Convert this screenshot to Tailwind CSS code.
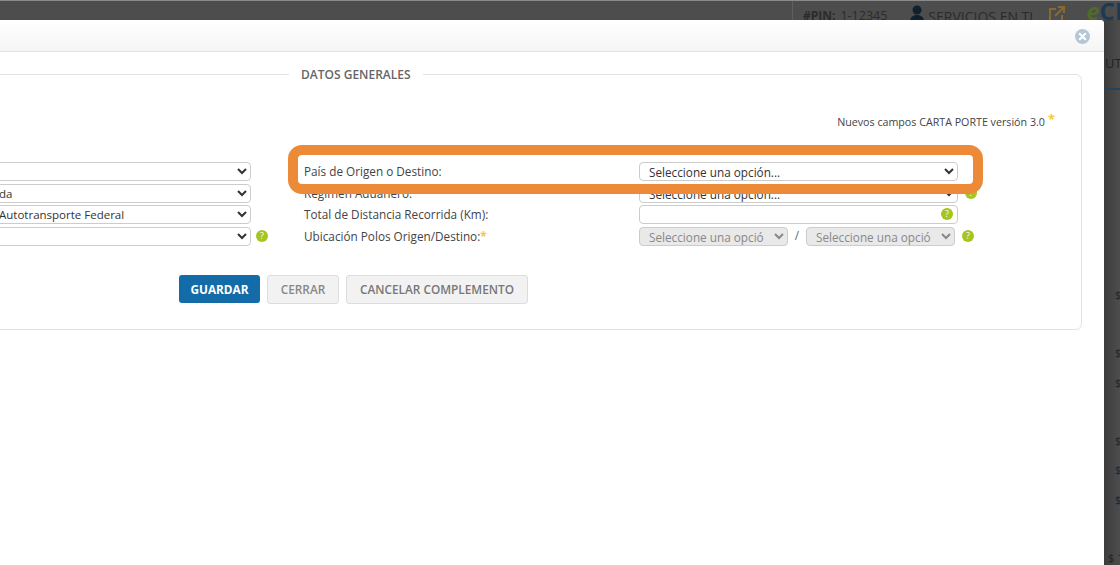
<!DOCTYPE html>
<html lang="es">
<head>
    <meta charset="UTF-8">
    <title>Carta Porte</title>
    <script src="https://cdn.jsdelivr.net/npm/@tailwindcss/browser@4"></script>
</head>
<body class="m-0 overflow-hidden">
    <div class="relative w-[1120px] h-[565px] overflow-hidden bg-[#4b4b4b] font-['Open_Sans',sans-serif] text-[12px] text-[#444]">

        <!-- Top bar behind the modal -->
        <header class="h-[20px] flex items-start justify-end bg-[#4d4d4d] border-t border-[#8a8a8a] text-[#2b2b2b] whitespace-nowrap">
            <div class="flex items-center h-[30px] w-[328px] shrink-0 border-l border-[#5e5e5e]">
                <span class="ml-[10px] font-bold text-[12px]">#PIN:</span>
                <span class="ml-[5px] text-[12.5px]">1-12345</span>
                <span class="ml-[9px] w-px h-[22px] bg-[#5e5e5e]"></span>
                <svg class="ml-[14px] mb-[5px] shrink-0" width="14" height="18" viewBox="0 0 14 18"><circle cx="7" cy="5" r="4.5" fill="#10202c"/><path d="M0 17c0-5 3-7 7-7s7 2 7 7z" fill="#10202c"/></svg>
                <span class="ml-[4px] text-[14px]">SERVICIOS EN TI</span>
                <svg class="ml-[15px] mb-[3px] shrink-0" width="17" height="17" viewBox="0 0 17 17" fill="none" stroke="#8a6a2c" stroke-width="2"><path d="M8 3H2v12h12V9M7 10l8-8M10 1h6v6"/></svg>
                <span class="ml-[21px] text-[24px] font-bold leading-none mb-[10px]"><span class="italic text-[#4f6a2a]">e</span><span class="text-[#1c3a52]">CF</span></span>
            </div>
        </header>

        <div class="flex h-[545px]">
            <!-- Modal -->
            <div class="relative z-10 shrink-0 w-[1124px] ml-[-20px] bg-white rounded-t-[4px]">
                <div class="h-[32px] flex items-center justify-end pr-[14px] bg-gradient-to-b from-white to-[#f5f5f5] border-b border-[#e2e2e2] rounded-t-[4px]">
                    <svg class="mt-[2px]" width="15" height="15" viewBox="0 0 15 15"><circle cx="7.5" cy="7.5" r="7.5" fill="#b5c7d6"/><path d="M4.8 4.8l5.4 5.4M10.2 4.8l-5.4 5.4" stroke="#fff" stroke-width="2.2" stroke-linecap="round"/></svg>
                </div>

                <div class="pt-[12px] pl-[10px] pr-[22px]">
                    <fieldset class="h-[266px] border border-[#e3e3e3] rounded-[6px]">
                        <legend class="ml-[298px] px-[12px] pt-[2px] text-[12px] font-semibold text-[#666]">DATOS GENERALES</legend>

                        <div class="flex justify-end items-start h-[47px] pt-[30px] pr-[26px] text-[10.7px]">
                            <span class="leading-[16px]">Nuevos campos CARTA PORTE versión 3.0</span>
                            <span class="ml-[3px] text-[#f5c83c] text-[13px] font-bold leading-[10px]">*</span>
                        </div>

                        <div class="flex mt-[31px] text-[11.75px]">
                            <!-- Left column -->
                            <div class="grid gap-y-[2.5px] w-[260px] ml-[-1px] shrink-0 auto-rows-[19px] text-[11.5px]">
                                <select class="w-[261px] h-[19px] pl-[4px] pr-[2px] border border-[#ccc] rounded-[4px] bg-white text-[#333]"><option></option></select>
                                <select class="w-[261px] h-[19px] pl-[4px] pr-[2px] border border-[#ccc] rounded-[4px] bg-white text-[#333]"><option>da</option></select>
                                <select class="w-[261px] h-[19px] pl-[4px] pr-[2px] border border-[#ccc] rounded-[4px] bg-white text-[#333]"><option>Autotransporte Federal</option></select>
                                <div class="flex items-center">
                                    <select class="w-[261px] h-[19px] shrink-0 pl-[4px] pr-[2px] border border-[#ccc] rounded-[4px] bg-white text-[#333]"><option></option></select>
                                    <span class="ml-[5px] w-[12px] h-[12px] shrink-0 rounded-full bg-[#a5c61e] text-white text-[9px] leading-[12px] text-center">?</span>
                                </div>
                            </div>

                            <!-- Right column -->
                            <div class="grid gap-y-[2.5px] ml-[54px] auto-rows-[19px] grid-cols-[335px_1fr]">
                                <label class="leading-[19px]">País de Origen o Destino:</label>
                                <select class="w-[319px] h-[19px] pl-[5px] pr-[2px] border border-[#ccc] rounded-[4px] bg-white text-[#333]"><option>Seleccione una opción...</option></select>

                                <label class="leading-[19px]">Régimen Aduanero:</label>
                                <div class="flex items-center">
                                    <select class="w-[319px] h-[19px] shrink-0 pl-[5px] pr-[2px] border border-[#ccc] rounded-[4px] bg-white text-[#333]"><option>Seleccione una opción...</option></select>
                                    <span class="ml-[7px] w-[12px] h-[12px] shrink-0 rounded-full bg-[#a5c61e] text-white text-[9px] leading-[12px] text-center">?</span>
                                </div>

                                <label class="leading-[19px]">Total de Distancia Recorrida (Km):</label>
                                <div class="flex items-center w-[319px] h-[19px] pr-[4px] pb-[2px] justify-end border border-[#ccc] rounded-[4px] bg-white">
                                    <span class="w-[12px] h-[12px] rounded-full bg-[#a5c61e] text-white text-[9px] leading-[12px] text-center">?</span>
                                </div>

                                <label class="leading-[19px]">Ubicación Polos Origen/Destino:<span class="text-[#f5c83c] font-bold">*</span></label>
                                <div class="flex items-center">
                                    <select disabled class="w-[149px] h-[19px] shrink-0 pl-[5px] pr-[2px] border border-[#ccc] rounded-[4px] bg-[#e9e9e9] text-[#888]"><option>Seleccione una opció</option></select>
                                    <span class="w-[18px] text-center text-[#666]">/</span>
                                    <select disabled class="w-[149px] h-[19px] shrink-0 pl-[5px] pr-[2px] border border-[#ccc] rounded-[4px] bg-[#e9e9e9] text-[#888]"><option>Seleccione una opció</option></select>
                                    <span class="ml-[7px] w-[12px] h-[12px] shrink-0 rounded-full bg-[#a5c61e] text-white text-[9px] leading-[12px] text-center">?</span>
                                </div>
                            </div>
                        </div>

                        <div class="flex gap-[7px] mt-[29px] ml-[188px] text-[11.8px]">
                            <button class="w-[81px] h-[28px] pt-[2px] rounded-[3px] bg-[#136ba8] text-white font-bold">GUARDAR</button>
                            <button class="w-[72px] h-[29px] pt-[2px] rounded-[3px] border border-[#ddd] bg-[#f2f2f2] text-[#888] font-semibold">CERRAR</button>
                            <button class="w-[182px] h-[29px] pt-[2px] rounded-[3px] border border-[#ddd] bg-[#f2f2f2] text-[#777] font-semibold">CANCELAR COMPLEMENTO</button>
                        </div>
                    </fieldset>
                </div>
            </div>

            <!-- Page peeking out on the right -->
            <div class="flex-1 min-w-0 overflow-hidden bg-gradient-to-r from-[#3c3c3c] to-[#4d4d4d] text-[11px] leading-[16px] text-[#222] whitespace-nowrap">
                <div class="mt-[35px] pl-[1px] text-[13px]">UT</div>
                <div class="mt-[17px] h-[2px] bg-[#24425a]"></div>
                <div class="mt-[197px] pl-[11px]">$</div>
                <div class="mt-[42px] pl-[11px]">$</div>
                <div class="mt-[14px] pl-[11px]">$</div>
                <div class="mt-[42px] pl-[11px]">$</div>
                <div class="mt-[13px] pl-[11px]">$</div>
                <div class="mt-[14px] pl-[11px]">$</div>
                <div class="mt-[42px] pl-[4px]">$ 1</div>
            </div>
        </div>

        <!-- Orange highlight annotation -->
        <div class="absolute z-20 left-[288px] top-[145px] w-[695px] h-[49px] border-[10px] border-[#ec8a37] rounded-[14px]"></div>
    </div>
</body>
</html>
